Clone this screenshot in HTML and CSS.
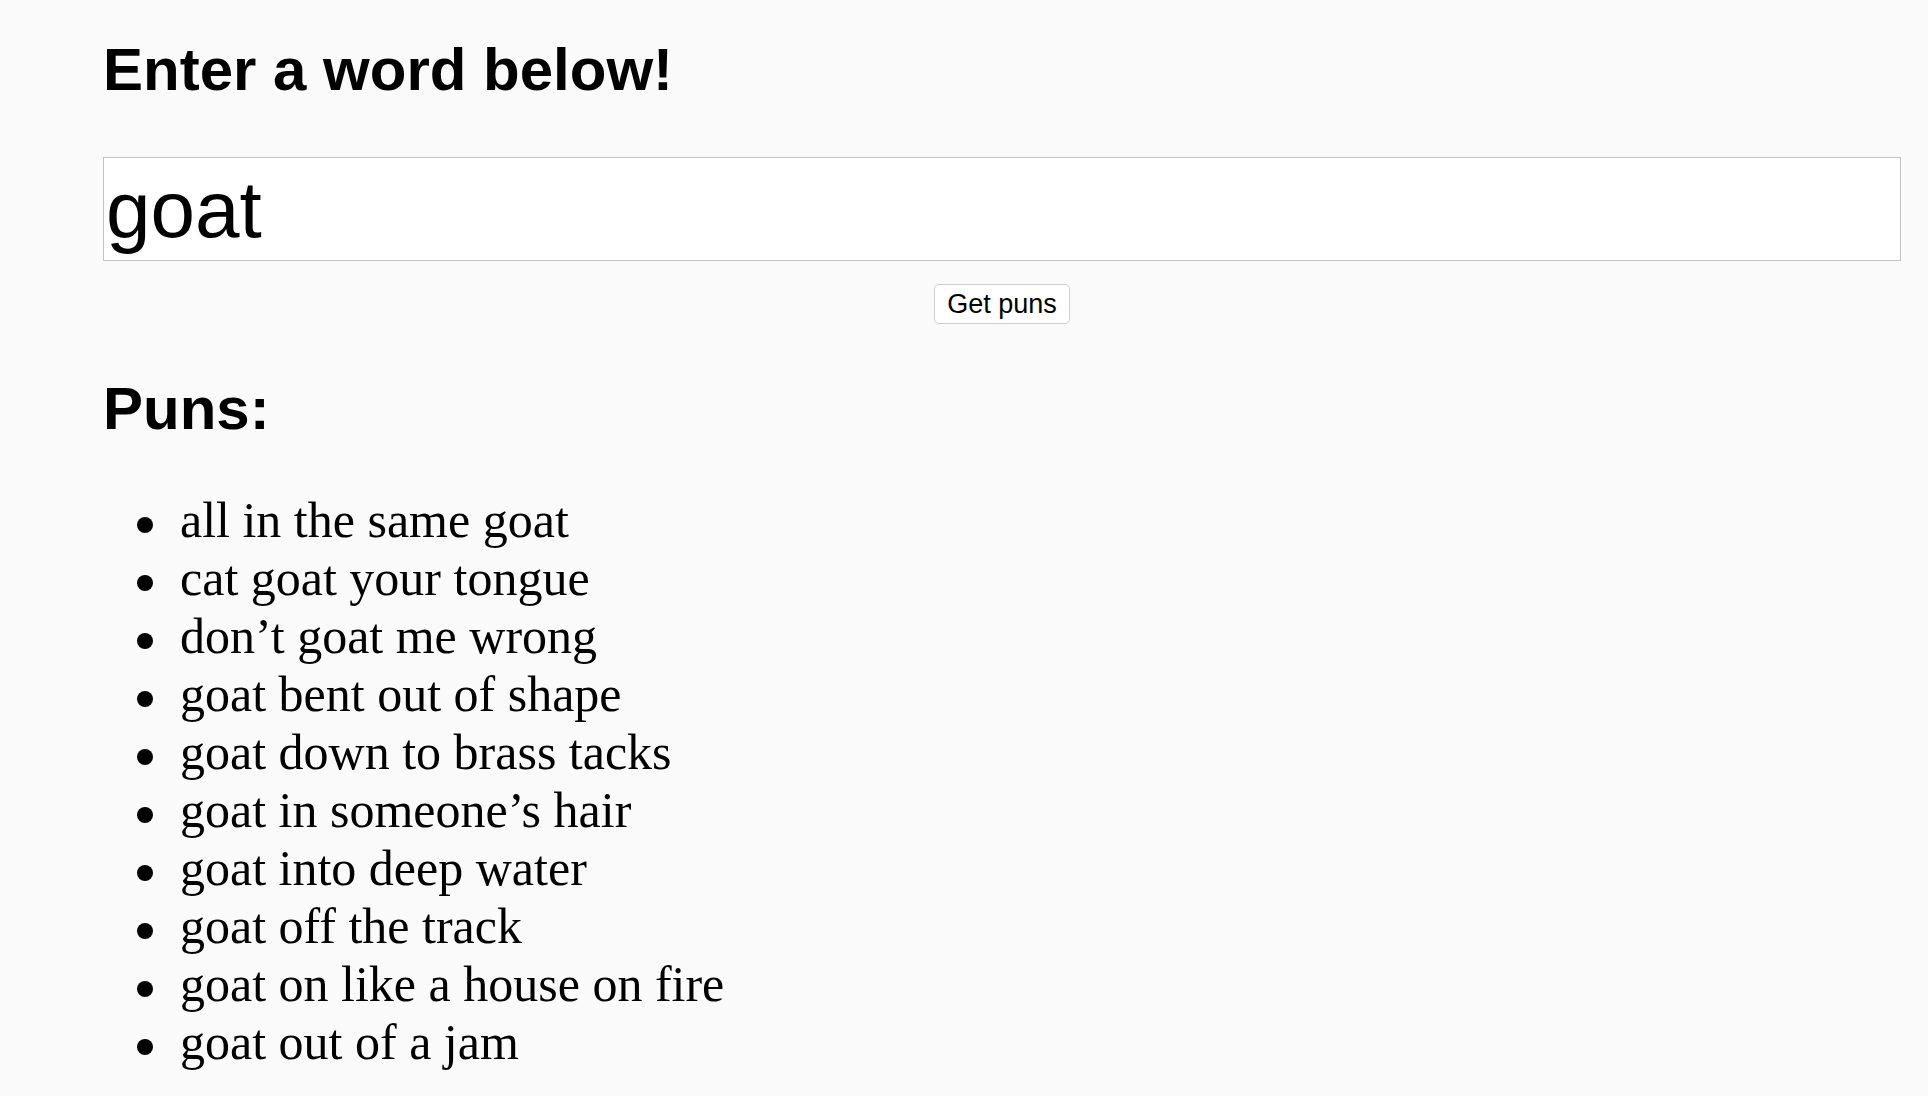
FILE: index.html
```html
<!DOCTYPE html>
<html lang="en">
<head>
<meta charset="utf-8">
<title>Puns</title>
<link rel="stylesheet" href="styles.css">
</head>
<body>
<main class="page">
  <h1 class="title">Enter a word below!</h1>
  <form class="search">
    <input class="word-input" type="text" value="goat">
    <button class="go-btn" type="button">Get puns</button>
  </form>
  <h2 class="title puns-title">Puns:</h2>
  <ul class="puns">
    <li>all in the same goat</li>
    <li>cat goat your tongue</li>
    <li>don’t goat me wrong</li>
    <li>goat bent out of shape</li>
    <li>goat down to brass tacks</li>
    <li>goat in someone’s hair</li>
    <li>goat into deep water</li>
    <li>goat off the track</li>
    <li>goat on like a house on fire</li>
    <li>goat out of a jam</li>
  </ul>
</main>
</body>
</html>
```
FILE: styles.css
```css
html, body {
  margin: 0;
  padding: 0;
  background: #fafafa;
  color: #000;
}
.page {
  padding: 36px 27px 0 103px;
}
.title {
  font-family: "Liberation Sans", Arial, sans-serif;
  font-weight: bold;
  font-size: 60px;
  line-height: 68px;
  margin: 0;
}
.search {
  margin: 53px 0 0;
  display: flex;
  flex-direction: column;
  align-items: center;
  gap: 23px;
}
.word-input {
  box-sizing: border-box;
  width: 100%;
  height: 104px;
  margin: 0;
  border: 1px solid #c4c4c4;
  background: #fff;
  padding: 6px 2px 4px;
  font-family: "Liberation Sans", Arial, sans-serif;
  font-size: 80px;
  line-height: 92px;
  color: #000;
  outline: none;
}
.go-btn {
  box-sizing: border-box;
  width: 136px;
  height: 40px;
  margin: 0;
  padding: 0;
  border: 1px solid #cfcfcf;
  border-radius: 5px;
  background: #fff;
  font-family: "Liberation Sans", Arial, sans-serif;
  font-size: 27px;
  line-height: 38px;
  color: #000;
}
.puns-title {
  margin-top: 51px;
}
.puns {
  margin: 48px 0 0;
  padding: 0 0 0 77px;
  list-style: none;
  font-family: "Liberation Serif", "Times New Roman", serif;
  font-size: 50px;
  line-height: 58px;
}
.puns li::before {
  content: "";
  display: inline-block;
  width: 16px;
  height: 16px;
  border-radius: 50%;
  background: #000;
  margin-left: -43px;
  margin-right: 27px;
  vertical-align: 4px;
}
```
